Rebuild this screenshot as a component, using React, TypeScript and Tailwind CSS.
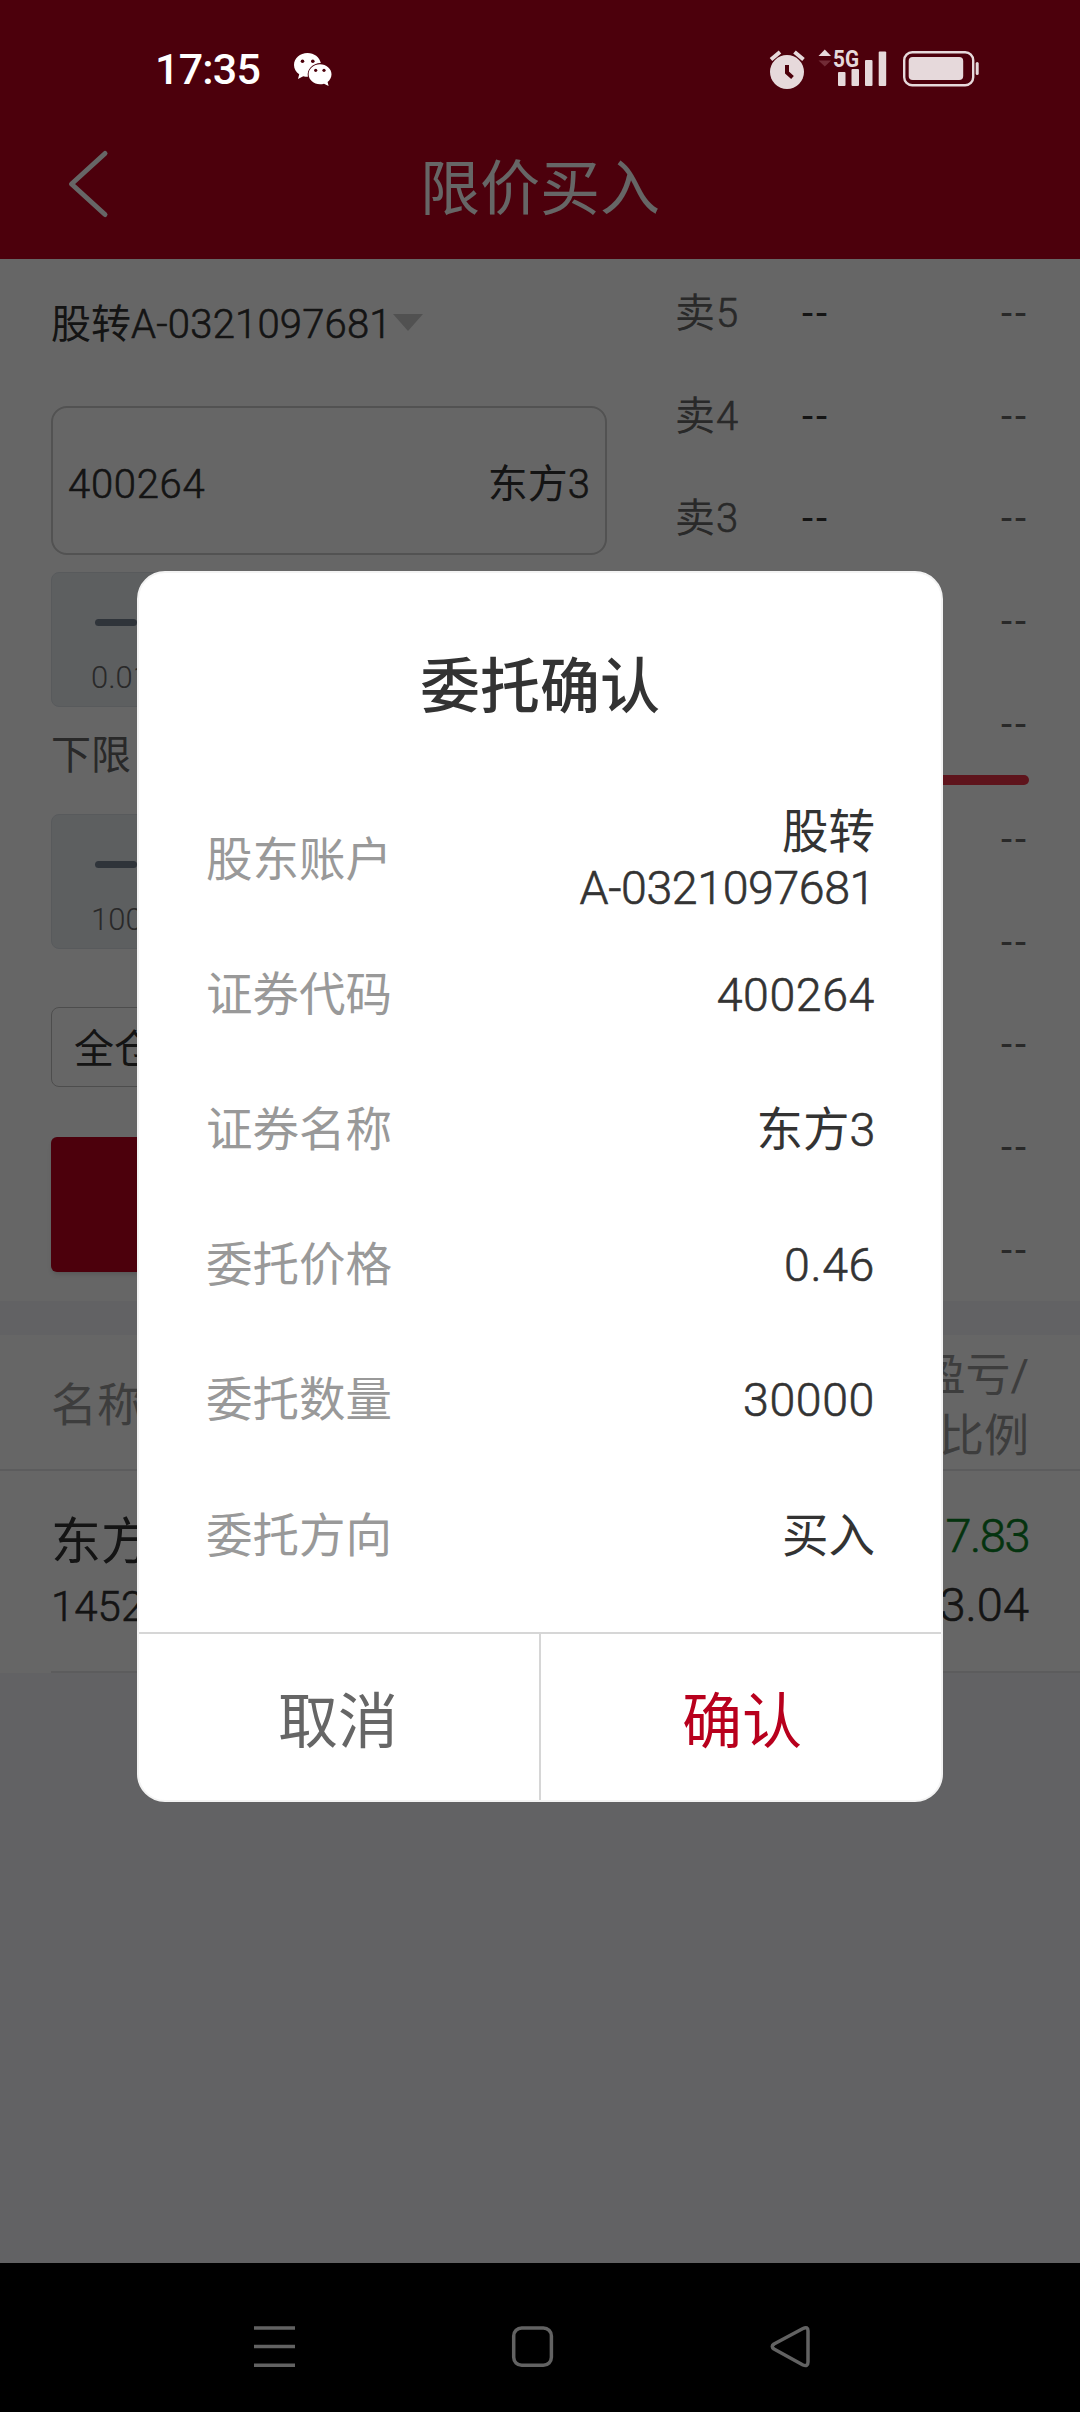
import { useState } from "react"

type Linha = { rotulo: string; valor: string; numero?: string }

const detalhes: Linha[] = [
  { rotulo: "股东账户", valor: "股转", numero: "A-0321097681" },
  { rotulo: "证券代码", valor: "", numero: "400264" },
  { rotulo: "证券名称", valor: "东方", numero: "3" },
  { rotulo: "委托价格", valor: "", numero: "0.46" },
  { rotulo: "委托数量", valor: "", numero: "30000" },
  { rotulo: "委托方向", valor: "买入" },
]

const vendas = ["5", "4", "3", "2", "1"]
const compras = ["1", "2", "3", "4", "5"]

const BarraStatus = () => (
  <div className="relative z-20 flex h-[120px] items-start pl-[155px] text-white">
    <span className="mt-[43px] w-[139px] text-[43px] leading-[52px] font-medium tracking-[-0.8px]">17:35</span>
    <svg className="mt-[53px]" width="39" height="33" viewBox="0 0 39 33" fill="#fff">
      <path d="M13.500 0C6 0 0 5.400 0 12c0 3.800 2 7.100 5.200 9.300L4 26l5.200-2.800c1.500.4 3 .6 4.700.6-1.400-7 4.600-13.600 12.900-13.700C25.600 4.300 20.200 0 13.500 0z" />
      <path d="M26 11.300c-6.300 0-11.400 4.500-11.400 10s5.100 10 11.400 10c1.400 0 2.800-.2 4-.6L34.600 33l-1-4c2.400-1.800 3.900-4.600 3.900-7.700 0-5.500-5.200-10-11.500-10z" />
      <g fill="#4c000b">
        <circle cx="8.500" cy="8.300" r="1.800" />
        <circle cx="18.800" cy="8.300" r="1.800" />
        <circle cx="21.700" cy="17.300" r="1.600" />
        <circle cx="30" cy="17.300" r="1.600" />
      </g>
    </svg>
    <svg className="mt-[46px] ml-[435px]" width="213" height="45" viewBox="768 46 213 45" fill="#e6d9db">
      <circle cx="787" cy="72" r="17" />
      <path d="M771 59.500l9-7.500M803.500 59.500l-9-7.500" stroke="#e6d9db" strokeWidth="4" />
      <path d="M787 65v7.500l5.500 5" fill="none" stroke="#4c000b" strokeWidth="4" />
      <path d="M818.500 56l6.300-6.500 6.300 6.500z" />
      <path d="M818.500 60.500h12.600l-6.300 6z" fill="#722b36" />
      <text x="833" y="67" fontSize="24" fontWeight="700" textLength="26" lengthAdjust="spacingAndGlyphs">5G</text>
      <rect x="838" y="72" width="7.500" height="14" rx="1" />
      <rect x="851.500" y="69" width="7.500" height="17" rx="1" />
      <rect x="865" y="60" width="7.500" height="26" rx="1" />
      <rect x="878.700" y="51.500" width="7.500" height="34.500" rx="1" />
      <rect x="904.200" y="52.200" width="69" height="33" rx="8" fill="none" stroke="#e6d9db" strokeWidth="2.400" />
      <rect x="908.700" y="57" width="54.500" height="23" rx="4" />
      <rect x="975.700" y="62" width="3" height="13" rx="1.500" />
    </svg>
  </div>
)

const Cabecalho = () => (
  <header className="h-[259px] bg-[#be001e]">
    <BarraStatus />
    <div className="flex h-[128px] items-center pl-[66px]">
      <svg width="44" height="72" viewBox="0 0 44 72" fill="none" stroke="#fff" strokeWidth="5" strokeLinecap="round" strokeLinejoin="round">
        <path d="M39 5.500L5.500 36 39 66.500" />
      </svg>
      <h1 className="ml-[310px] pt-[11px] text-[60px] leading-[70px] text-white">限价买入</h1>
    </div>
  </header>
)

// traço fino: meio-termo entre o peso light e o regular
const Numero = ({ children, className = "" }: { children: string; className?: string }) => (
  <span className={`inline-block font-light whitespace-nowrap [-webkit-text-stroke:0.6px] ${className}`}>{children}</span>
)

const Ajuste = ({ passo }: { passo: string }) => (
  <div className="flex h-[135px] w-[556px] flex-col rounded-lg border border-[#dbe1e7] bg-[#e9edf1] pl-[39px]">
    <div className="mt-[46px] ml-1 h-[7px] w-[42px] rounded-full bg-[#758291]" />
    <span className="mt-[32px] text-[31px] leading-[40px] font-light text-[#666]">{passo}</span>
  </div>
)

const Oferta = ({ lado, nivel }: { lado: string; nivel: string }) => (
  <div className="flex h-[103px] items-center pt-[3px] text-[40px] text-[#666]">
    <span className="w-[127px]">{lado}<Numero className="ml-px">{nivel}</Numero></span>
    <span className="tracking-[3px] text-[#333]">--</span>
    <span className="ml-auto tracking-[3px]">--</span>
  </div>
)

const Negociacao = () => (
  <section className="flex h-[1042px] justify-between bg-white pr-[51px] pl-[51px] text-[40px] text-[#333]">
    <div className="flex w-[556px] flex-col">
      <div className="mt-[42px] flex h-[48px] items-center">
        <span>股转<Numero className="tracking-[0.2px]">A-0321097681</Numero></span>
        <svg className="mb-[6px] ml-[1px]" width="30" height="17" viewBox="0 0 30 17" fill="#cacaca">
          <path d="M0 0h30L15 17z" />
        </svg>
      </div>
      <div className="mt-[57px] flex h-[149px] items-center justify-between rounded-[16px] border-2 border-[#cdcdcd] px-[15px] pt-[8px]">
        <Numero className="tracking-[0.7px]">400264</Numero>
        <span>东方<Numero>3</Numero></span>
      </div>
      <div className="mt-[17px]">
        <Ajuste passo="0.01" />
      </div>
      <p className="mt-[22px] h-[85px] leading-[54px] text-[#666]">下限</p>
      <Ajuste passo="100" />
      <div className="mt-[58px] flex h-[80px] w-[130px] items-center rounded-lg border border-[#c0c0c0] pt-[5px] pl-[22px] whitespace-nowrap">全仓</div>
      <button className="mt-[50px] h-[135px] rounded-[6px] bg-[#be001e] text-white shadow-md">买入</button>
    </div>
    <div className="flex w-[354px] flex-col pt-[2px]">
      {vendas.map((n) => <Oferta key={n} lado="卖" nivel={n} />)}
      <div className="mb-[2px] h-[10px] shrink-0 rounded-full bg-[#eb3248]" />
      {compras.map((n) => <Oferta key={n} lado="买" nivel={n} />)}
    </div>
  </section>
)

const Posicoes = () => (
  <section className="mt-[34px] bg-white">
    <div className="flex h-[136px] items-center justify-between border-b-2 border-[#e6e6e8] px-[51px] text-[46px] leading-[61px] text-[#999]">
      <span className="pt-[6px]">名称</span>
      <span className="pt-[7px] text-right text-[45px]">盈亏/<br />比例</span>
    </div>
    <div className="ml-[51px] flex h-[202px] justify-between border-b-2 border-[#e6e6e8] pr-[51px] text-[#333]">
      <div className="flex flex-col pt-[36px]">
        <span className="text-[50px] leading-[70px]">东方3</span>
        <Numero className="text-[42px] leading-[60px]">14520</Numero>
      </div>
      <div className="flex flex-col pt-[30px] text-right text-[47px] leading-[69px]">
        <Numero className="tracking-[-1.500px] text-[#0b8026]">7.83</Numero>
        <Numero>3.04</Numero>
      </div>
    </div>
  </section>
)

const Navegacao = () => (
  <nav className="mt-auto h-[149px] bg-black">
    <svg width="1080" height="149" viewBox="0 2263 1080 149" fill="none" stroke="#626262" strokeWidth="3.500">
      <path d="M254 2328h41M254 2346.500h41M254 2365.300h41" />
      <rect x="513.700" y="2328" width="37.700" height="37.300" rx="8" />
      <path d="M803 2328.500L774 2344q-3.500 2.500 0 5l29 16q5 2 5-3v-31q0-5-5-2.500z" strokeLinejoin="round" />
    </svg>
  </nav>
)

const Confirmacao = ({ fechar }: { fechar: () => void }) => (
  <div className="absolute top-[571px] left-[137px] flex h-[1231px] w-[806px] flex-col overflow-hidden rounded-[28px] border-2 border-[#f3f3f3] bg-white">
    <h2 className="mt-[75px] text-center text-[60px] leading-[80px] font-medium text-[#333]">委托确认</h2>
    <dl className="mt-[64px] flex flex-col px-[66px] text-[46.500px] leading-[56px] text-[#333]">
      {detalhes.map((d) => (
        <div key={d.rotulo} className="flex h-[135.200px] items-center justify-between">
          <dt className="pl-px text-[#999]">{d.rotulo}</dt>
          <dd className="max-w-[298px] text-right">
            {d.valor}
            {d.numero && <Numero className={d.valor ? "tracking-[-0.4px]" : "-mt-[2px] block tracking-[0.6px]"}>{d.numero}</Numero>}
          </dd>
        </div>
      ))}
    </dl>
    <div className="-mx-[2px] mt-auto flex h-[168px] border-t-2 border-[#d6d6d6] text-[60px]">
      <button onClick={fechar} className="flex-1 border-r-2 border-[#d6d6d6] pt-[11px] text-[#666]">取消</button>
      <button onClick={fechar} className="flex-1 pt-[11px] text-[#b8001d]">确认</button>
    </div>
  </div>
)

const App = () => {
  const [ aberto, setAberto ] = useState<boolean>(true)

  return (
    <main className="relative flex h-[2412px] w-[1080px] flex-col overflow-hidden bg-[#f5f5f9] font-['Roboto','Noto_Sans_CJK_SC',sans-serif]">
      <Cabecalho />
      <Negociacao />
      <Posicoes />
      {aberto && (
        <div className="absolute inset-0 z-10 bg-black/60">
          <Confirmacao fechar={() => setAberto(false)} />
        </div>
      )}
      <div className="relative z-20 mt-auto">
        <Navegacao />
      </div>
    </main>
  )
}

export default App
